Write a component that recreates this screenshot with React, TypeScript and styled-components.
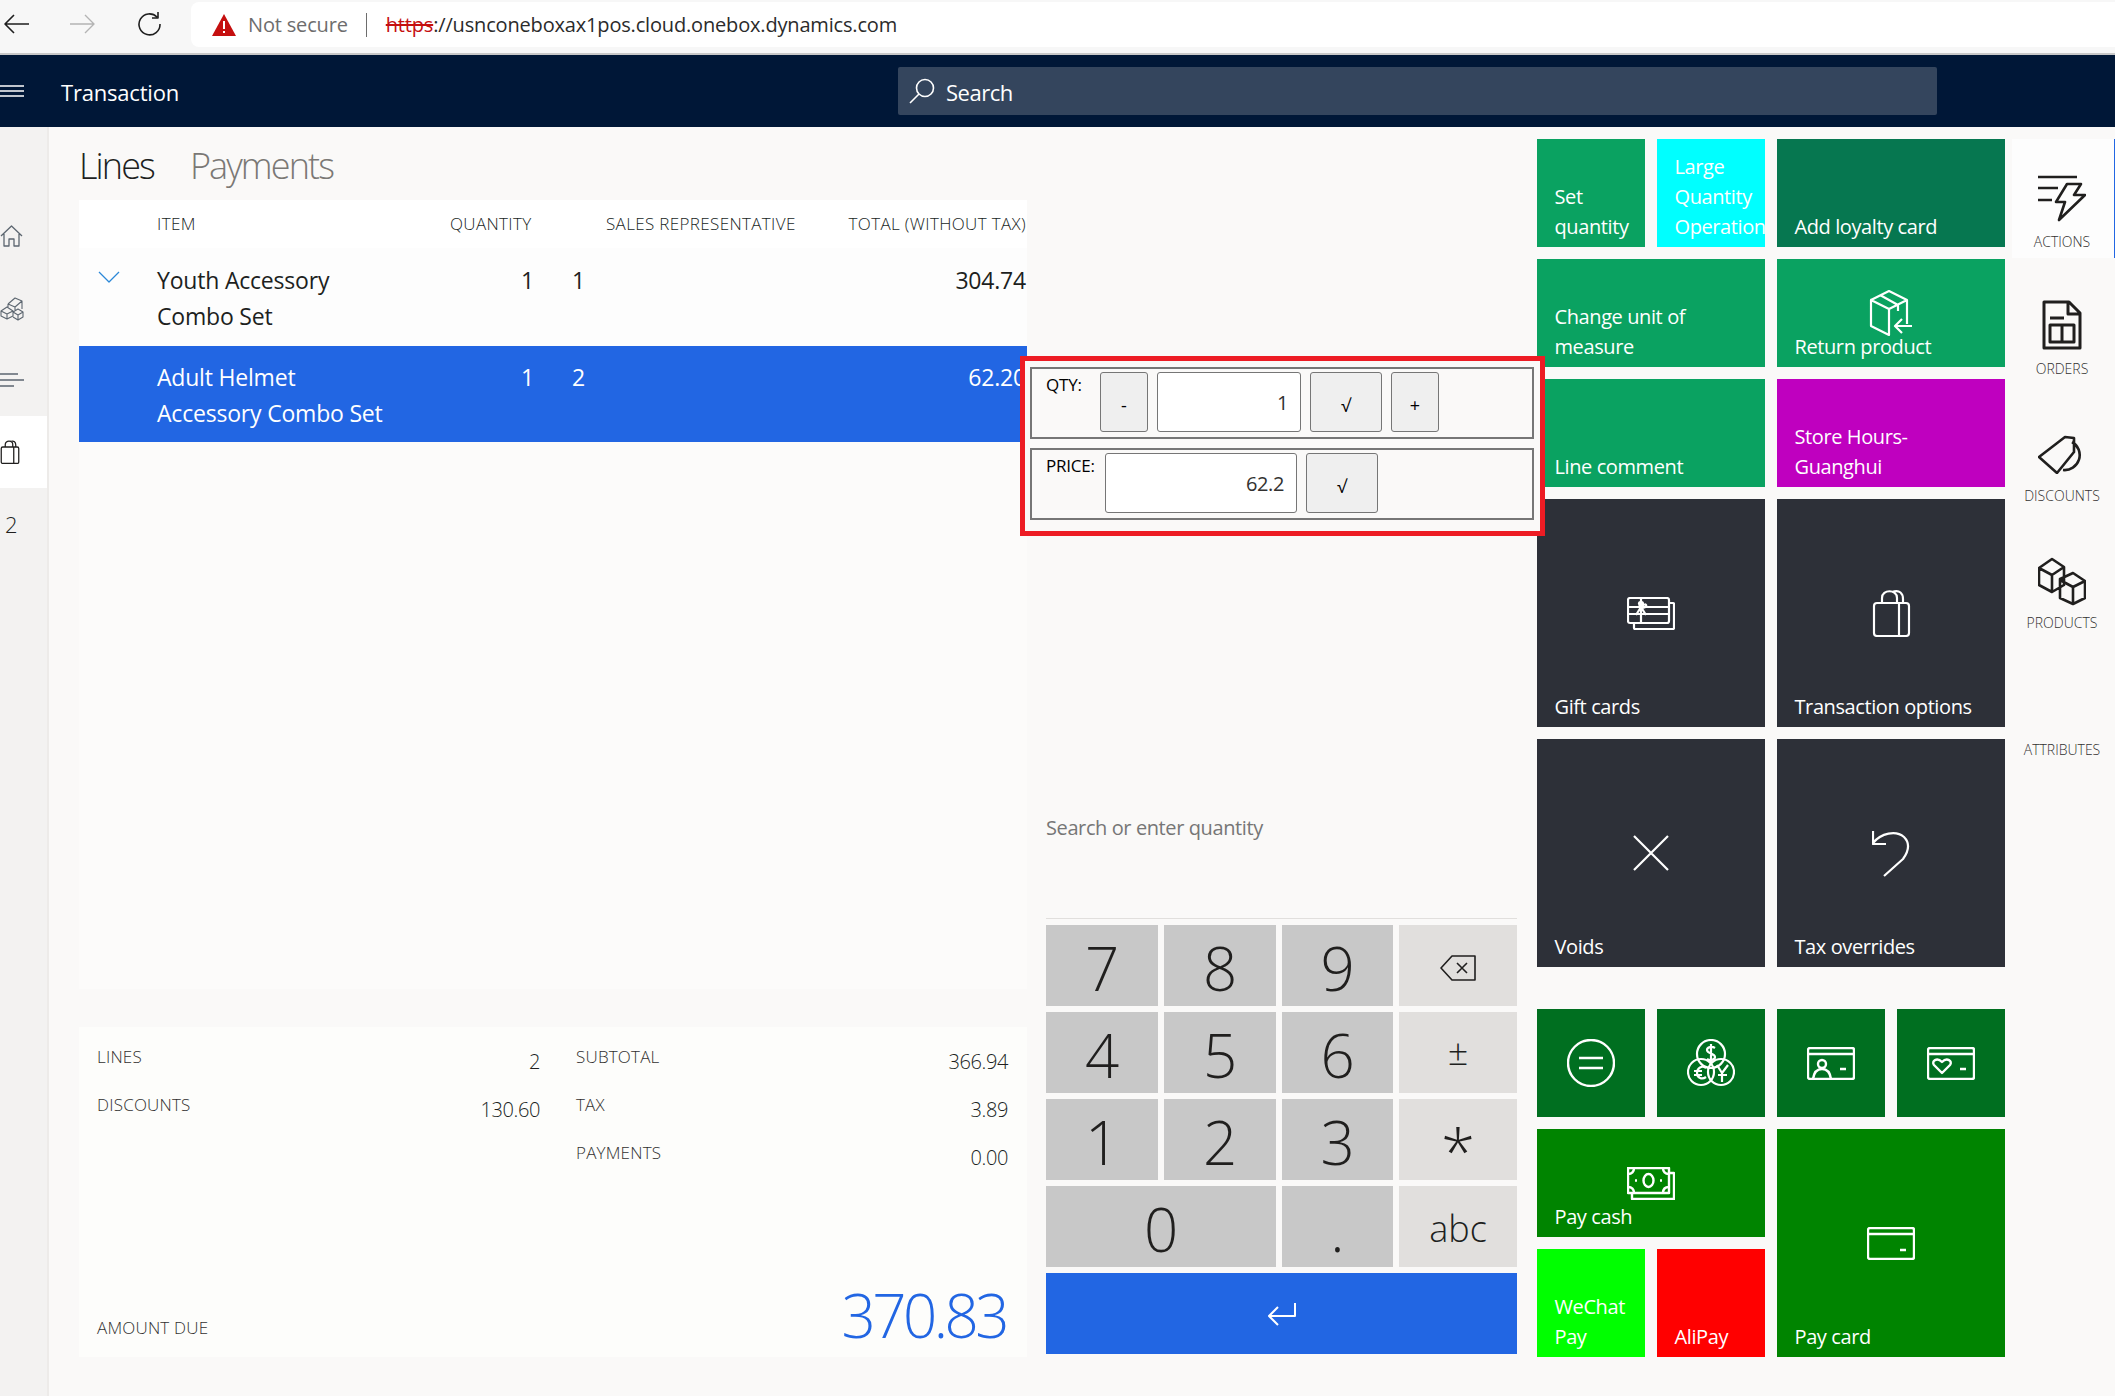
import React from 'react';
import styled, { createGlobalStyle } from 'styled-components';

const GlobalStyle = createGlobalStyle`
  html, body { margin: 0; padding: 0; background: #faf9f8; }
  body { font-family: "Open Sans", "Noto Sans", sans-serif; color: #201f1e; }
  * { box-sizing: border-box; }
`;

const Glyph = ({ w = 48, h = 48, sw = 2, vb, children }: { w?: number; h?: number; sw?: number; vb?: string; children: React.ReactNode }) => (
  <Svg width={w} height={h} viewBox={vb || `0 0 ${w} ${h}`} strokeWidth={sw}>
    {children}
  </Svg>
);

const Svg = styled.svg`
  display: block;
  fill: none;
  stroke: currentColor;
  stroke-linejoin: round;
`;

const HomeIcon = () => (
  <Glyph w={23} h={22} sw={1.3}><path d="M1 11 11.5 1 22 11M4 9v12h5v-7h5v7h5V9" /></Glyph>
);
const BoxesIcon = () => (
  <Glyph w={24} h={25} sw={1.1}>
    <path d="M1 15l6-4 6 4v5l-6 3-6-3zM1 15l6 3 6-3M7 18v5M13 16l5-3 5 3v5l-5 3-5-3M13 16l5 3 5-3M18 19v5M8 8l7-6 7 3v8M8 8v3M8 8l7 3 7-6M15 11v3" />
  </Glyph>
);
const LinesIcon = () => (
  <Glyph w={24} h={14} sw={1.3}><path d="M0 1h18M0 7h24M0 13h14" /></Glyph>
);
const BagIcon = ({ w = 20, h = 24, sw = 1.4 }: { w?: number; h?: number; sw?: number }) => (
  <Glyph w={w} h={h} sw={sw} vb="0 0 39 48">
    <rect x="2" y="14" width="35" height="33" rx="3" strokeWidth={sw * 1.8} />
    <path d="M10 14V9c0-9 15-9 15 0v5M20 3c8-3 11 2 11 7v4M27 14v33" strokeWidth={sw * 1.8} />
  </Glyph>
);
const ActionsIcon = () => (
  <Glyph w={48} h={48} sw={2.6}>
    <path d="M0 3h39M0 14h20M0 26h14M29 10h14l-7 11h11L21 46l6-18H18z" />
  </Glyph>
);
const OrdersIcon = () => (
  <Glyph w={40} h={50} sw={3}>
    <path d="M2 2h25l11 11v35H2zM26 2v12h12M8 18h14M8 25h24v17H8zM20 25v17" />
  </Glyph>
);
const DiscountIcon = () => (
  <Glyph w={48} h={44} vb="0 -6 48 44" sw={2.6}>
    <path d="M1 21 27 1l9 1v14L19 37zM34 6A15 15 0 0 1 25 34" />
  </Glyph>
);
const ProductsIcon = () => (
  <Glyph w={48} h={54} vb="0 -5 48 54" sw={2.6}>
    <path d="m1 11 13-9 12 8v18l-12 7-13-7zM1 11l13 7 12-8M14 18v17M22 22l13-6 12 8v17l-12 6-13-6V22zM22 23l13 7 12-6M35 30v17" />
  </Glyph>
);
const ReturnIcon = () => (
  <Glyph w={44} h={46} sw={2.2}>
    <path d="M2 10 20 1l18 9v24M2 10v26l18 9V19L2 10zM20 19l18-9M11 5l18 10v6M26 36h17M33 29l-7 7 7 7" />
  </Glyph>
);
const GiftIcon = () => (
  <Glyph w={48} h={33} sw={2.2}>
    <rect x="1" y="1" width="41" height="25" rx="2" />
    <path d="M42 6h4a1 1 0 0 1 1 1v24a1 1 0 0 1-1 1H8a1 1 0 0 1-1-1v-5M1 10h41M1 17h41M14 1v25M14 10c-7-7 7-7 0 0zM14 10c7-7 7 3 0 0zM14 10l-5 8M14 10l5 8" />
  </Glyph>
);
const CloseIcon = () => (
  <Glyph w={36} h={36} sw={2.2}><path d="M1 1l34 34M35 1 1 35" /></Glyph>
);
const UndoIcon = () => (
  <Glyph w={38} h={48} sw={2.2}>
    <path d="M1 2v13h13M1 14C9 4 24 1 32 8c7 7 4 15-1 22L12 47" />
  </Glyph>
);
const EqualsIcon = () => (
  <Glyph w={48} h={48} sw={2.4}><circle cx="24" cy="24" r="23" /><path d="M12 19h24M12 29h24" /></Glyph>
);
const CoinsIcon = () => (
  <Glyph w={48} h={48} sw={2.2}>
    <circle cx="24" cy="15" r="14" /><circle cx="14" cy="33" r="13" /><circle cx="34" cy="33" r="13" />
    <path d="M28 9c-3-2-8-1-8 2 0 4 8 3 8 7 0 3-5 4-8 2M24 5v20M19 29c-4-3-9 0-9 5s5 7 9 4M7 32h8M7 36h8M30 26l5 8 6-8M35 34v9M31 36h9" />
  </Glyph>
);
const IdCardIcon = () => (
  <Glyph w={48} h={33} sw={2.4}>
    <rect x="1" y="1" width="46" height="31" rx="2" /><path d="M1 7h46M33 22h6" />
    <circle cx="15" cy="17" r="4" /><path d="M6 32c1-7 4-10 9-10s8 3 9 10" />
  </Glyph>
);
const HeartCardIcon = () => (
  <Glyph w={48} h={33} sw={2.4}>
    <rect x="1" y="1" width="46" height="31" rx="2" /><path d="M1 7h46M33 22h6" />
    <path d="M15 26 7 18c-3-4 3-8 8-3 5-5 11-1 8 3z" />
  </Glyph>
);
const CashIcon = () => (
  <Glyph w={48} h={33} sw={2.4}>
    <rect x="1" y="1" width="41" height="25" /><path d="M42 6h5v26H5v-6M1 7c4 0 6-2 6-6M36 1c0 4 2 6 6 6M1 20c4 0 6 2 6 6M36 26c0-4 2-6 6-6M8 13.5h2M33 13.5h2" />
    <ellipse cx="21.500" cy="13.500" rx="5" ry="6.500" />
  </Glyph>
);
const CardIcon = () => (
  <Glyph w={48} h={33} sw={2.4}>
    <rect x="1" y="1" width="46" height="31" rx="2" /><path d="M1 7h46M33 23h6" />
  </Glyph>
);

type TileSpec = {
  label?: string;
  bg: string;
  w: number;
  h: number;
  icon?: React.ReactNode;
};

const GREEN = '#0aa261';
const SLATE = '#2d3038';
const FOREST = '#006f20';
const PAY = '#008400';

const actionTiles: TileSpec[] = [
  { label: 'Set\nquantity', bg: GREEN, w: 1, h: 1 },
  { label: 'Large\nQuantity\nOperation', bg: '#00ffff', w: 1, h: 1 },
  { label: 'Add loyalty card', bg: '#067750', w: 2, h: 1 },
  { label: 'Change unit of\nmeasure', bg: GREEN, w: 2, h: 1 },
  { label: 'Return product', bg: GREEN, w: 2, h: 1, icon: <ReturnIcon /> },
  { label: 'Line comment', bg: GREEN, w: 2, h: 1 },
  { label: 'Store Hours-\nGuanghui', bg: '#bf00bf', w: 2, h: 1 },
  { label: 'Gift cards', bg: SLATE, w: 2, h: 2, icon: <GiftIcon /> },
  { label: 'Transaction options', bg: SLATE, w: 2, h: 2, icon: <BagIcon w={39} h={48} sw={1.2} /> },
  { label: 'Voids', bg: SLATE, w: 2, h: 2, icon: <CloseIcon /> },
  { label: 'Tax overrides', bg: SLATE, w: 2, h: 2, icon: <UndoIcon /> },
];

const payTiles: TileSpec[] = [
  { bg: FOREST, w: 1, h: 1, icon: <EqualsIcon /> },
  { bg: FOREST, w: 1, h: 1, icon: <CoinsIcon /> },
  { bg: FOREST, w: 1, h: 1, icon: <IdCardIcon /> },
  { bg: FOREST, w: 1, h: 1, icon: <HeartCardIcon /> },
  { label: 'Pay cash', bg: PAY, w: 2, h: 1, icon: <CashIcon /> },
  { label: 'Pay card', bg: PAY, w: 2, h: 2, icon: <CardIcon /> },
  { label: 'WeChat\nPay', bg: '#00ff00', w: 1, h: 1 },
  { label: 'AliPay', bg: '#ff0000', w: 1, h: 1 },
];

const keypad = [
  { key: '7' }, { key: '8' }, { key: '9' }, { key: 'back', side: true },
  { key: '4' }, { key: '5' }, { key: '6' }, { key: '±', side: true },
  { key: '1' }, { key: '2' }, { key: '3' }, { key: '*', side: true },
  { key: '0', wide: true }, { key: '.' }, { key: 'abc', side: true },
];

const keyKind = (key: string) => {
  if (key === 'abc') return 'letters';
  if (key === '±') return 'sign';
  if (key === '*') return 'star';
  return 'digit';
};

const tabs = [
  { name: 'Actions', icon: <ActionsIcon />, active: true },
  { name: 'Orders', icon: <OrdersIcon /> },
  { name: 'Discounts', icon: <DiscountIcon /> },
  { name: 'Products', icon: <ProductsIcon /> },
  { name: 'Attributes' },
];

const App = () => (
  <Page>
    <GlobalStyle />
    <BrowserBar>
      <NavButton>
        <Glyph w={26} h={20} sw={1.6}><path d="M26 10H2M11 1l-9 9 9 9" /></Glyph>
      </NavButton>
      <NavButton $dim>
        <Glyph w={26} h={20} sw={1.4}><path d="M0 10h24M15 1l9 9-9 9" /></Glyph>
      </NavButton>
      <NavButton>
        <Glyph w={24} h={24} sw={1.6}><path d="M20 5a10.500 10.500 0 1 0 3 7M21 0v6h-6" /></Glyph>
      </NavButton>
      <AddressBar>
        <svg width="24" height="22" viewBox="0 0 24 22">
          <path d="M12 0 24 22H0z" fill="#c50f0f" />
          <path d="M11 7h2v8h-2zM11 17h2v2h-2z" fill="#fff" />
        </svg>
        <NotSecure>Not secure</NotSecure>
        <AddressDivider />
        <Url><s>https</s>://usnconeboxax1pos.cloud.onebox.dynamics.com</Url>
      </AddressBar>
    </BrowserBar>

    <AppHeader>
      <Hamburger>
        <Glyph w={24} h={12} sw={1.4}><path d="M0 1h24M0 6h24M0 11h24" /></Glyph>
      </Hamburger>
      <AppTitle>Transaction</AppTitle>
      <SearchBox>
        <Glyph w={26} h={26} sw={1.6}><circle cx="16" cy="10" r="8.500" /><path d="M10 16 1 25" /></Glyph>
        <span>Search</span>
      </SearchBox>
    </AppHeader>

    <Body>
      <Rail>
        <RailItem><HomeIcon /></RailItem>
        <RailItem><BoxesIcon /></RailItem>
        <RailItem><LinesIcon /></RailItem>
        <RailItem $active><BagIcon /></RailItem>
        <RailItem><RailCount>2</RailCount></RailItem>
      </Rail>

      <LeftColumn>
        <TabRow>
          <TabTitle $active>Lines</TabTitle>
          <TabTitle>Payments</TabTitle>
        </TabRow>
        <LinesCard>
          <HeaderRow>
            <span />
            <span>ITEM</span>
            <span>QUANTITY</span>
            <HeaderSales>SALES REPRESENTATIVE</HeaderSales>
            <RightCell>TOTAL (WITHOUT TAX)</RightCell>
          </HeaderRow>
          <LineRow>
            <ChevronCell>
              <Glyph w={22} h={12} sw={1.3}><path d="M1 1l10 10L21 1" /></Glyph>
            </ChevronCell>
            <span>Youth Accessory<br />Combo Set</span>
            <QtyCell>1</QtyCell>
            <SalesCell>1</SalesCell>
            <RightCell>304.74</RightCell>
          </LineRow>
          <LineRow $selected>
            <span />
            <span>Adult Helmet<br />Accessory Combo Set</span>
            <QtyCell>1</QtyCell>
            <SalesCell>2</SalesCell>
            <RightCell>62.20</RightCell>
          </LineRow>
        </LinesCard>
        <Summary>
          <SummaryGrid>
            <SummaryItem><SummaryLabel>LINES</SummaryLabel><SummaryValue>2</SummaryValue></SummaryItem>
            <SummaryItem><SummaryLabel>SUBTOTAL</SummaryLabel><SummaryValue>366.94</SummaryValue></SummaryItem>
            <SummaryItem><SummaryLabel>DISCOUNTS</SummaryLabel><SummaryValue>130.60</SummaryValue></SummaryItem>
            <SummaryItem><SummaryLabel>TAX</SummaryLabel><SummaryValue>3.89</SummaryValue></SummaryItem>
            <span />
            <SummaryItem><SummaryLabel>PAYMENTS</SummaryLabel><SummaryValue>0.00</SummaryValue></SummaryItem>
          </SummaryGrid>
          <AmountRow>
            <SummaryLabel>AMOUNT DUE</SummaryLabel>
            <Amount>370.83</Amount>
          </AmountRow>
        </Summary>
      </LeftColumn>

      <CenterColumn>
        <QuantityHint>Search or enter quantity</QuantityHint>
        <HintRule />
        <Keypad>
          {keypad.map((k) => (
            <Key key={k.key} $side={k.side} $wide={k.wide} $kind={keyKind(k.key)}>
              {k.key === 'back' ? (
                <Glyph w={36} h={26} sw={1.6}>
                  <path d="M12 1h23v24H12L1 13zM17 8l10 10M27 8 17 18" />
                </Glyph>
              ) : k.key}
            </Key>
          ))}
          <EnterKey>
            <Glyph w={30} h={24} sw={2}><path d="M28 1v13H2M11 5l-9 9 9 9" /></Glyph>
          </EnterKey>
        </Keypad>
      </CenterColumn>

      <TileColumn>
        <TileGrid>
          {actionTiles.map((t) => <TileView key={t.label} {...t} />)}
        </TileGrid>
        <TileGrid>
          {payTiles.map((t, i) => <TileView key={i} {...t} />)}
        </TileGrid>
      </TileColumn>

      <SideTabs>
        {tabs.map((t) => (
          <SideTab key={t.name} $active={t.active}>
            <SideTabIcon>{t.icon}</SideTabIcon>
            <SideTabLabel>{t.name}</SideTabLabel>
          </SideTab>
        ))}
      </SideTabs>
    </Body>

    <Callout>
      <EditPanel>
        <EditLabel $width={54}>QTY:</EditLabel>
        <StepButton>-</StepButton>
        <EditInput $width={144}>1</EditInput>
        <ConfirmButton>√</ConfirmButton>
        <StepButton>+</StepButton>
      </EditPanel>
      <EditPanel>
        <EditLabel $width={59}>PRICE:</EditLabel>
        <EditInput $width={192}>62.2</EditInput>
        <ConfirmButton>√</ConfirmButton>
      </EditPanel>
    </Callout>
  </Page>
);

const TileView = ({ label, bg, w, h, icon }: TileSpec) => (
  <Tile $bg={bg} $w={w} $h={h}>
    {icon && <TileIcon>{icon}</TileIcon>}
    {label && <TileLabel>{label}</TileLabel>}
  </Tile>
);

const Page = styled.div`
  position: relative;
  width: 2115px;
  height: 1396px;
  overflow: hidden;
  display: flex;
  flex-direction: column;
`;

const BrowserBar = styled.div`
  height: 55px;
  flex: none;
  display: flex;
  align-items: flex-start;
  padding-left: 3px;
  background: #f7f7f7;
  border-bottom: 2px solid #c8c8c8;
`;

const NavButton = styled.div<{ $dim?: boolean }>`
  width: 67px;
  height: 48px;
  display: flex;
  align-items: center;
  color: ${(p) => (p.$dim ? '#b4b4b4' : '#1f1f1f')};
  &:nth-child(3) {
    width: 54px;
    padding-left: 0;
  }
`;

const AddressBar = styled.div`
  flex: 1;
  height: 45px;
  margin-top: 2px;
  display: flex;
  align-items: center;
  padding-left: 21px;
  background: #fff;
  border-radius: 8px 0 0 8px;
  font-size: 20px;
  letter-spacing: -0.17px;
`;

const NotSecure = styled.span`
  margin-left: 12px;
  color: #6d6d6d;
`;

const AddressDivider = styled.span`
  width: 1px;
  height: 24px;
  margin: 0 19px 0 18px;
  background: #6d6d6d;
`;

const Url = styled.span`
  color: #2b2b2b;
  s {
    color: #c50f0f;
  }
`;

const AppHeader = styled.div`
  height: 72px;
  flex: none;
  position: relative;
  display: flex;
  align-items: center;
  background: #001737;
  color: #fff;
`;

const Hamburger = styled.div`
  width: 61px;
`;

const AppTitle = styled.div`
  width: 837px;
  padding-top: 2px;
  font-size: 22px;
  letter-spacing: -0.2px;
`;

const SearchBox = styled.div`
  width: 1039px;
  height: 48px;
  display: flex;
  align-items: center;
  gap: 11px;
  padding-left: 11px;
  background: #34455d;
  border-radius: 2px;
  font-size: 22px;
  letter-spacing: -0.5px;
  span {
    padding-top: 2px;
  }
`;

const Body = styled.div`
  flex: 1;
  min-height: 0;
  display: flex;
`;

const Rail = styled.div`
  width: 49px;
  flex: none;
  padding-top: 73px;
  background: #f3f2f1;
  border-right: 2px solid #edebe9;
`;

const RailItem = styled.div<{ $active?: boolean }>`
  height: 72px;
  display: flex;
  align-items: center;
  color: #5c6670;
  background: ${(p) => (p.$active ? '#fff' : 'transparent')};
  ${(p) => p.$active && 'color: #201f1e;'}
`;

const RailCount = styled.span`
  padding-left: 5px;
  font-size: 22px;
  font-weight: 300;
  color: #201f1e;
`;

const LeftColumn = styled.div`
  width: 948px;
  flex: none;
  margin-left: 30px;
  display: flex;
  flex-direction: column;
`;

const TabRow = styled.div`
  height: 73px;
  display: flex;
  gap: 36px;
  padding-top: 14px;
`;

const TabTitle = styled.div<{ $active?: boolean }>`
  font-size: 36px;
  font-weight: 300;
  letter-spacing: -1.9px;
  color: ${(p) => (p.$active ? '#201f1e' : '#7a7875')};
`;

const LinesCard = styled.div`
  height: 789px;
  background: #fcfbfa;
`;

const rowColumns = '78px 293px 85px 1fr 180px';

const HeaderRow = styled.div`
  height: 48px;
  display: grid;
  grid-template-columns: ${rowColumns};
  align-items: center;
  padding-bottom: 2px;
  background: #fff;
  font-size: 17px;
  font-weight: 300;
  letter-spacing: 0.35px;
  color: #201f1e;
  white-space: nowrap;
`;

const HeaderSales = styled.span`
  padding-left: 71px;
`;

const LineRow = styled.div<{ $selected?: boolean }>`
  height: ${(p) => (p.$selected ? '96px' : '98px')};
  display: grid;
  grid-template-columns: ${rowColumns};
  align-content: start;
  padding-top: ${(p) => (p.$selected ? '13px' : '14px')};
  font-size: 23px;
  line-height: 36px;
  letter-spacing: -0.2px;
  white-space: nowrap;
  background: ${(p) => (p.$selected ? '#2266e3' : '#fdfdfd')};
  color: ${(p) => (p.$selected ? '#fff' : '#201f1e')};
`;

const ChevronCell = styled.span`
  padding: 9px 0 0 19px;
  color: #2b88d8;
`;

const QtyCell = styled.span`
  padding-right: 1px;
  text-align: right;
`;

const SalesCell = styled.span`
  padding-left: 37px;
`;

const RightCell = styled.span`
  text-align: right;
  white-space: nowrap;
  padding-right: 1px;
`;

const Summary = styled.div`
  height: 330px;
  margin-top: 38px;
  display: flex;
  flex-direction: column;
  justify-content: space-between;
  padding: 18px 18px 17px;
  background: #fdfdfb;
`;

const SummaryGrid = styled.div`
  display: grid;
  grid-template-columns: 443px 432px;
  column-gap: 36px;
  grid-auto-rows: 48px;
`;

const SummaryItem = styled.div`
  display: flex;
  justify-content: space-between;
  align-items: flex-start;
`;

const SummaryLabel = styled.span`
  font-size: 17px;
  line-height: 24px;
  font-weight: 300;
  letter-spacing: 0.2px;
  color: #323130;
`;

const SummaryValue = styled.span`
  margin-top: 4px;
  font-size: 20px;
  line-height: 26px;
  font-weight: 300;
  letter-spacing: -0.4px;
`;

const AmountRow = styled.div`
  display: flex;
  justify-content: space-between;
  align-items: flex-end;
`;

const Amount = styled.span`
  margin: 0 3px -11px 0;
  font-size: 60px;
  line-height: 72px;
  font-weight: 300;
  letter-spacing: -3.5px;
  color: #2266e3;
`;

const CenterColumn = styled.div`
  width: 471px;
  flex: none;
  margin-left: 19px;
  display: flex;
  flex-direction: column;
  justify-content: flex-end;
  padding-bottom: 42px;
`;

const QuantityHint = styled.div`
  font-size: 20px;
  letter-spacing: -0.4px;
  color: #767676;
  margin-bottom: 77px;
`;

const HintRule = styled.div`
  height: 1px;
  margin-bottom: 6px;
  background: #e1dfdd;
`;

const Keypad = styled.div`
  display: grid;
  grid-template-columns: 112px 112px 111px 118px;
  grid-auto-rows: 81px;
  gap: 6px;
`;

const keyFonts = {
  digit: 'font-size: 60px; padding-top: 4px;',
  letters: 'font-size: 36px; padding-top: 5px;',
  sign: 'font-size: 36px; padding-bottom: 1px;',
  star: 'font-size: 62px; padding-top: 22px;',
};

const Key = styled.div<{ $side?: boolean; $wide?: boolean; $kind: keyof typeof keyFonts }>`
  display: flex;
  align-items: center;
  justify-content: center;
  grid-column: ${(p) => (p.$wide ? 'span 2' : 'auto')};
  background: ${(p) => (p.$side ? '#e1dfdd' : '#c8c8c8')};
  color: #201f1e;
  font-weight: 300;
  line-height: 1;
  ${(p) => keyFonts[p.$kind]}
`;

const EnterKey = styled.div`
  grid-column: 1 / -1;
  display: flex;
  align-items: center;
  justify-content: center;
  background: #2266e3;
  color: #fff;
`;

const TileColumn = styled.div`
  width: 468px;
  flex: none;
  margin-left: 20px;
  padding-top: 12px;
  display: flex;
  flex-direction: column;
  gap: 42px;
`;

const TileGrid = styled.div`
  display: grid;
  grid-template-columns: repeat(4, 108px);
  grid-auto-rows: 108px;
  gap: 12px;
`;

const Tile = styled.div<{ $bg: string; $w: number; $h: number }>`
  display: grid;
  overflow: hidden;
  grid-column: span ${(p) => p.$w};
  grid-row: span ${(p) => p.$h};
  background: ${(p) => p.$bg};
  color: #fff;
`;

const TileIcon = styled.div`
  grid-area: 1 / 1;
  place-self: center;
`;

const TileLabel = styled.div`
  grid-area: 1 / 1;
  align-self: end;
  padding: 0 0 5px 17.500px;
  font-size: 20px;
  line-height: 30px;
  letter-spacing: -0.4px;
  white-space: pre;
`;

const SideTabs = styled.div`
  width: 103px;
  flex: none;
  margin-left: 7px;
  padding-top: 12px;
  display: flex;
  flex-direction: column;
  gap: 8px;
`;

const SideTab = styled.div<{ $active?: boolean }>`
  height: 119px;
  display: flex;
  flex-direction: column;
  align-items: center;
  padding-top: 35px;
  padding-right: 2px;
  background: ${(p) => (p.$active ? '#fdfdfd' : 'transparent')};
  border-right: 1px solid ${(p) => (p.$active ? '#2266e3' : 'transparent')};
`;

const SideTabIcon = styled.div`
  height: 48px;
  margin-bottom: 10px;
  display: flex;
  align-items: center;
  color: #201f1e;
`;

const SideTabLabel = styled.div`
  font-size: 14px;
  line-height: 20px;
  font-weight: 300;
  letter-spacing: 0;
  text-transform: uppercase;
  color: #323130;
`;

// the red highlight box lies over the table edge and the tile column
const Callout = styled.div`
  position: absolute;
  left: 1020px;
  top: 356px;
  width: 525px;
  height: 180px;
  display: flex;
  flex-direction: column;
  gap: 9px;
  padding: 6px 0 0 5px;
  background: #faf9f8;
  border: 5px solid #ed1c24;
`;

const EditPanel = styled.div`
  width: 504px;
  height: 72px;
  display: flex;
  gap: 9px;
  padding: 3px 0 0 14px;
  border: 2px solid #767676;
`;

const EditLabel = styled.div<{ $width: number }>`
  width: ${(p) => p.$width - 9}px;
  padding-top: 1px;
  font-size: 17px;
  line-height: 24px;
  letter-spacing: -0.2px;
  white-space: nowrap;
  color: #000;
`;

const controlBase = `
  height: 60px;
  border: 1px solid #767676;
  border-radius: 3px;
  font-size: 18px;
  color: #000;
`;

const StepButton = styled.div`
  ${controlBase}
  width: 48px;
  display: flex;
  align-items: center;
  justify-content: center;
  padding-top: 5px;
  background: #efefef;
`;

const ConfirmButton = styled(StepButton)`
  width: 72px;
`;

const EditInput = styled.div<{ $width: number }>`
  ${controlBase}
  width: ${(p) => p.$width}px;
  display: flex;
  align-items: center;
  justify-content: flex-end;
  padding-right: 12px;
  background: #fff;
  color: #323130;
  font-size: 20px;
  letter-spacing: -0.4px;
`;

export default App;
